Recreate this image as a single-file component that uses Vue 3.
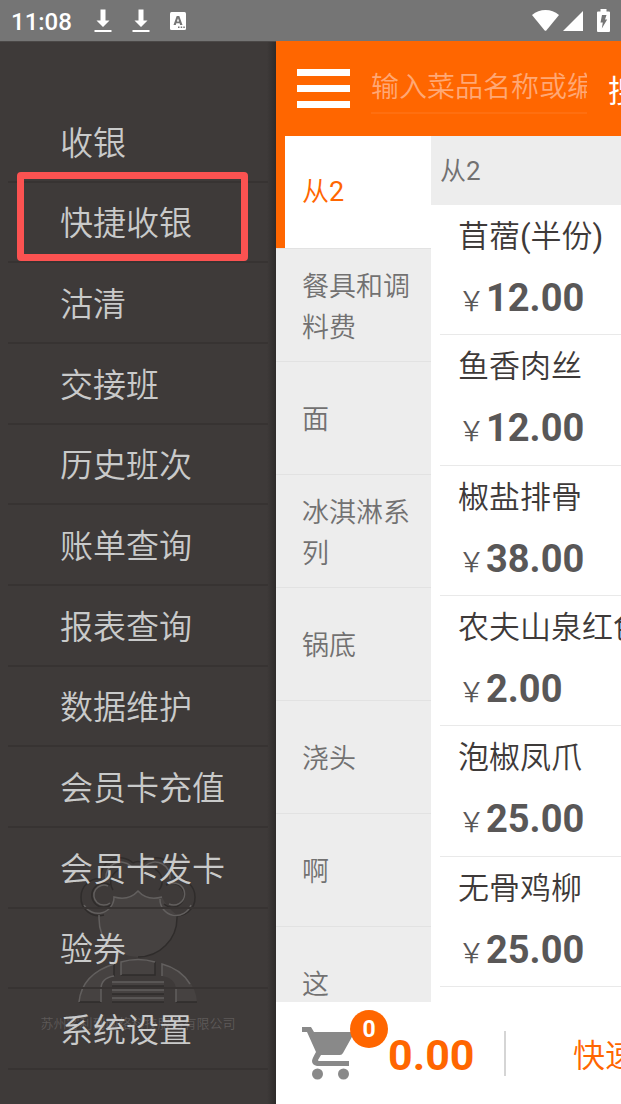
<script setup>
import { ref } from 'vue'

const menu = ['收银', '快捷收银', '沽清', '交接班', '历史班次', '账单查询', '报表查询', '数据维护', '会员卡充值', '会员卡发卡', '验券', '系统设置']
const highlighted = '快捷收银'

const categories = ['从2', '餐具和调料费', '面', '冰淇淋系列', '锅底', '浇头', '啊', '这']
const selected = ref('从2')

const dishes = [
  { name: '苜蓿(半份)', price: '12.00' },
  { name: '鱼香肉丝', price: '12.00' },
  { name: '椒盐排骨', price: '38.00' },
  { name: '农夫山泉红色', price: '2.00' },
  { name: '泡椒凤爪', price: '25.00' },
  { name: '无骨鸡柳', price: '25.00' },
]
const keyword = ref('')
</script>

<template>
  <div class="screen">
    <header class="status">
      <span class="time">11:08</span>
      <svg v-for="n in 2" :key="n" class="download" viewBox="0 0 18 24" aria-hidden="true">
        <path d="M6.500 0.500h5v11h4L9 18 2.500 11.500h4zM0.500 21h17v2h-17z" />
      </svg>
      <svg class="keyboard" viewBox="0 0 16 18" aria-hidden="true">
        <rect width="16" height="18" rx="1.500" />
        <path class="hole" d="M6.700 4h2.600l3.200 9h-2.400l-.5-1.700H6.300L5.800 13H3.500zM8 6.200 6.900 9.600h2.200z" fill-rule="evenodd" />
        <path class="hole" d="M8 14.500h1.500V16H8zM10.700 14.500h1.500V16h-1.500zM13.300 14.500h1.500V16h-1.500z" />
      </svg>
      <span class="grow"></span>
      <svg class="wifi" viewBox="0 0 27 21" aria-hidden="true">
        <path d="M0 5Q6 0 13.500 0T27 5L14.300 20.400q-.8.900-1.600 0z" />
      </svg>
      <svg class="signal" viewBox="0 0 20 20" aria-hidden="true"><path d="M20 0v20H0z" /></svg>
      <svg class="battery" viewBox="0 0 13 23" aria-hidden="true">
        <path d="M3.500 0h6v2.500H12q1 0 1 1V22q0 1-1 1H1q-1 0-1-1V3.500q0-1 1-1h2.500z" />
        <path class="hole" d="M5 6h4.500L8 10.500h2.200L4.800 19.500 5.800 13.500H3.500z" />
      </svg>
    </header>

    <div class="body">
      <nav class="drawer">
        <div class="watermark" aria-hidden="true">
          <svg class="chef" viewBox="0 0 122 156">
            <g class="fill">
              <path d="M22 67V70A39 39 0 0 0 100 70V67Q90 60 85 49 70 53 61 43 52 53 37 49 34 62 22 67z" />
              <path d="M44 114q17-5 34 0v13H44zM2 154Q5 126 37 116v12Q24 130 24 141v13zM85 116Q118 127 120 154H99V141Q98 130 85 128z" />
              <path d="M35 134h52v4H35zM35 142h52v4H35zM35 150h52v4H35z" />
            </g>
            <g class="dark">
              <path d="M27 67A18 18 0 0 1 4 49 18 18 0 0 1 24 31M95 67A18 18 0 0 0 118 49 18 18 0 0 0 98 31" />
              <path d="M24 31A19 19 0 0 1 56 15M98 31A19 19 0 0 0 66 15M56 15Q61 12 66 15" />
              <path d="M33 37A12 12 0 1 0 35 56M89 37A12 12 0 1 1 87 56" />
              <path d="M36 42A14 14 0 0 1 44 21M82 42A14 14 0 0 0 78 21" />
              <path d="M100 67V70A39 39 0 0 1 61 109M44 127h34v-13M2 154h22M99 154h21M35 138h52M35 146h52M35 154h52M37 116v12" />
            </g>
            <g class="light">
              <path d="M7 57A16 16 0 0 0 37 49Q52 53 61 43 70 53 85 49M83 51A16 16 0 0 0 114 57" />
              <path d="M31 38A10 10 0 1 0 33 55M92 36A11 11 0 1 1 92 56" />
              <path d="M29 31A15 15 0 0 1 54 18M93 31A15 15 0 0 0 68 18" />
              <path d="M22 67V70Q22 88 33 98M44 127v-13q17-5 34 0M2 154Q5 126 37 116M24 154V141Q24 130 37 128M85 128v-12Q104 121 113 136M99 154v-13M35 134h52M35 142h52M35 150h52" />
            </g>
          </svg>
          <span class="company">苏州客利到网络科技服务有限公司</span>
        </div>
        <ul class="menu">
          <li v-for="item in menu" :key="item">
            <button type="button" :class="{ marked: item === highlighted }">{{ item }}</button>
          </li>
        </ul>
      </nav>

      <main class="shop">
        <div class="topbar">
          <button type="button" class="burger" aria-label="菜单"><i></i><i></i><i></i></button>
          <input v-model="keyword" class="search" type="text" placeholder="输入菜品名称或编号" aria-label="输入菜品名称或编号" />
          <button type="button" class="go">搜索</button>
        </div>

        <div class="content">
          <div class="categories">
            <button
              v-for="c in categories"
              :key="c"
              type="button"
              :class="['category', { active: c === selected }]"
              @click="selected = c"
            >{{ c }}</button>
          </div>
          <section class="list">
            <h2>{{ selected }}</h2>
            <ul>
              <li v-for="d in dishes" :key="d.name">
                <span class="name">{{ d.name }}</span>
                <span class="price"><span class="yen">￥</span><b>{{ d.price }}</b></span>
              </li>
            </ul>
          </section>
        </div>

        <footer class="cartbar">
          <button type="button" class="cart" aria-label="购物车">
            <svg viewBox="0 0 52 53" aria-hidden="true">
              <path d="M0 0h9l3 5h38q2 1 1 3L41 26q-1 2-3 2H19l-3 5q0 1 1 1h30v5H15q-5-1-5-5 0-2 4-9L5 5H0z" />
              <circle cx="15.500" cy="47" r="5.500" />
              <circle cx="41.500" cy="47" r="5.500" />
            </svg>
            <span class="badge">0</span>
          </button>
          <span class="total">0.00</span>
          <button type="button" class="quick">快速</button>
        </footer>
      </main>
    </div>
  </div>
</template>

<style>
body {
  background: #fff;
}
</style>

<style scoped>
.screen {
  display: flex;
  flex-direction: column;
  height: 100vh;
  overflow: hidden;
  font-family: Roboto, "Noto Sans CJK SC", sans-serif;
  font-weight: 400;
}
.screen * {
  box-sizing: border-box;
}
button {
  border: 0;
  padding: 0;
  margin: 0;
  background: none;
  font: inherit;
  color: inherit;
  white-space: nowrap;
  text-align: left;
}
ul {
  margin: 0;
  padding: 0;
  list-style: none;
}
svg {
  display: block;
  flex: none;
}

.status {
  display: flex;
  align-items: center;
  flex: none;
  height: 41px;
  padding: 0 11px;
  background: #757575;
  color: #fff;
}
.status svg {
  fill: #fff;
}
.status .hole {
  fill: #757575;
}
.time {
  width: 83px;
  font-size: 24px;
  font-weight: 500;
  line-height: 28px;
  padding-top: 2px;
}
.download {
  width: 18px;
  height: 24px;
  margin-right: 20px;
}
.keyboard {
  width: 16px;
  height: 18px;
}
.grow {
  flex: 1;
}
.wifi {
  width: 27px;
  height: 21px;
  margin-right: 4px;
}
.signal {
  width: 20px;
  height: 20px;
  margin-right: 14px;
}
.battery {
  width: 13px;
  height: 23px;
}

.body {
  display: flex;
  flex: 1;
  min-height: 0;
}

.drawer {
  position: relative;
  display: flex;
  flex: none;
  width: 276px;
  padding: 60px 8px 34px;
  border-top: 1px solid #4b4847;
  background: linear-gradient(90deg, #3e3a39 0, #3e3a39 267px, #2e2b2a 276px);
}
.menu {
  position: relative;
  display: grid;
  grid-auto-rows: 1fr;
  flex: 1;
}
.menu li {
  display: flex;
  border-bottom: 2px solid #373332;
}
.menu button {
  position: relative;
  flex: 1;
  padding-left: 52px;
  padding-top: 5px;
  font-size: 33px;
  font-weight: 350;
  line-height: 40px;
  color: #c9caca;
}
.menu .marked::after {
  content: "";
  position: absolute;
  inset: -11px 20px 0 9px;
  border: 7px solid #fb5251;
  border-radius: 4px;
}
.watermark {
  position: absolute;
  left: 0;
  right: 0;
  bottom: 70px;
  display: flex;
  flex-direction: column;
  align-items: center;
}
.chef {
  width: 122px;
  height: 156px;
}
.chef .fill {
  fill: #464241;
}
.chef .dark,
.chef .light {
  fill: none;
  stroke-width: 1.5;
}
.chef .dark {
  stroke: #2f2c2b;
}
.chef .light {
  stroke: #625f5e;
}
.company {
  margin-top: 10px;
  font-size: 13px;
  line-height: 20px;
  font-weight: 350;
  color: #5d5958;
}

.shop {
  display: flex;
  flex-direction: column;
  flex: 1;
  min-width: 0;
  overflow: hidden;
  background: #fff;
}
.topbar {
  display: flex;
  align-items: center;
  flex: none;
  height: 95px;
  padding-left: 21px;
  background: #ff6600;
  color: #fff;
}
.burger {
  display: flex;
  flex-direction: column;
  flex: none;
  gap: 9px;
  width: 53px;
}
.burger i {
  height: 7px;
  background: #fff;
}
.search {
  flex: none;
  width: 216px;
  height: 50px;
  margin: 0 21px;
  padding: 0;
  border: 0;
  border-bottom: 2px solid #ff6f10;
  outline: 0;
  background: none;
  color: #fff;
  font: inherit;
  font-weight: 350;
  font-size: 28px;
}
.search::placeholder {
  color: #ffa875;
  opacity: 1;
}
.go {
  flex: none;
  font-size: 31px;
}

.content {
  display: flex;
  flex: 1;
  min-height: 0;
  font-family: Roboto, "Noto Sans CJK SC DemiLight", "Noto Sans CJK SC", sans-serif;
}
.categories {
  flex: none;
  width: 155px;
  overflow: hidden;
  background: #ededed;
}
.category {
  display: block;
  width: 100%;
  height: 113px;
  padding: 5px 16px 0 26px;
  border-bottom: 1px solid #e2e2e2;
  white-space: normal;
  font-size: 27px;
  line-height: 41px;
  color: #727171;
}
.category.active {
  padding-top: 1px;
  background: #fff;
  box-shadow: inset 9px 0 #ff6600;
  color: #ff6600;
}
.list {
  display: flex;
  flex-direction: column;
  flex: 1;
  min-width: 0;
  overflow: hidden;
  padding-bottom: 15px;
}
h2 {
  flex: none;
  margin: 0;
  height: 69px;
  padding-left: 9px;
  background: #ededed;
  font-size: 26px;
  font-weight: 400;
  line-height: 71px;
  color: #727171;
}
.list ul {
  display: grid;
  grid-auto-rows: 1fr;
  flex: 1;
  margin-left: 9px;
}
.list li {
  display: flex;
  flex-direction: column;
  padding-left: 18px;
  border-bottom: 1px solid #e9e9e9;
  white-space: nowrap;
}
.name {
  height: 63px;
  font-size: 31px;
  line-height: 64px;
  color: #3e3a39;
}
.price {
  display: flex;
  align-items: baseline;
  line-height: 60px;
  color: #595757;
}
.yen {
  width: 28px;
  font-size: 27px;
}
.price b {
  font-size: 38px;
}

.cartbar {
  display: flex;
  align-items: center;
  flex: none;
  height: 102px;
  padding-left: 26px;
  color: #ff6600;
}
.cart {
  position: relative;
  flex: none;
  margin-right: 34px;
}
.cart svg {
  width: 52px;
  height: 53px;
  fill: #898989;
}
.badge {
  position: absolute;
  left: 48px;
  top: -17px;
  width: 38px;
  height: 38px;
  border-radius: 50%;
  background: #ff6600;
  color: #fff;
  font-size: 23px;
  font-weight: 700;
  line-height: 40px;
  text-align: center;
}
.total {
  flex: none;
  width: 116px;
  padding-top: 4px;
  font-size: 43px;
  font-weight: 700;
  line-height: 50px;
}
.quick {
  flex: none;
  height: 45px;
  padding-left: 67px;
  border-left: 2px solid #d5d5d5;
  font-size: 32px;
  font-weight: 350;
  line-height: 50px;
}
</style>
